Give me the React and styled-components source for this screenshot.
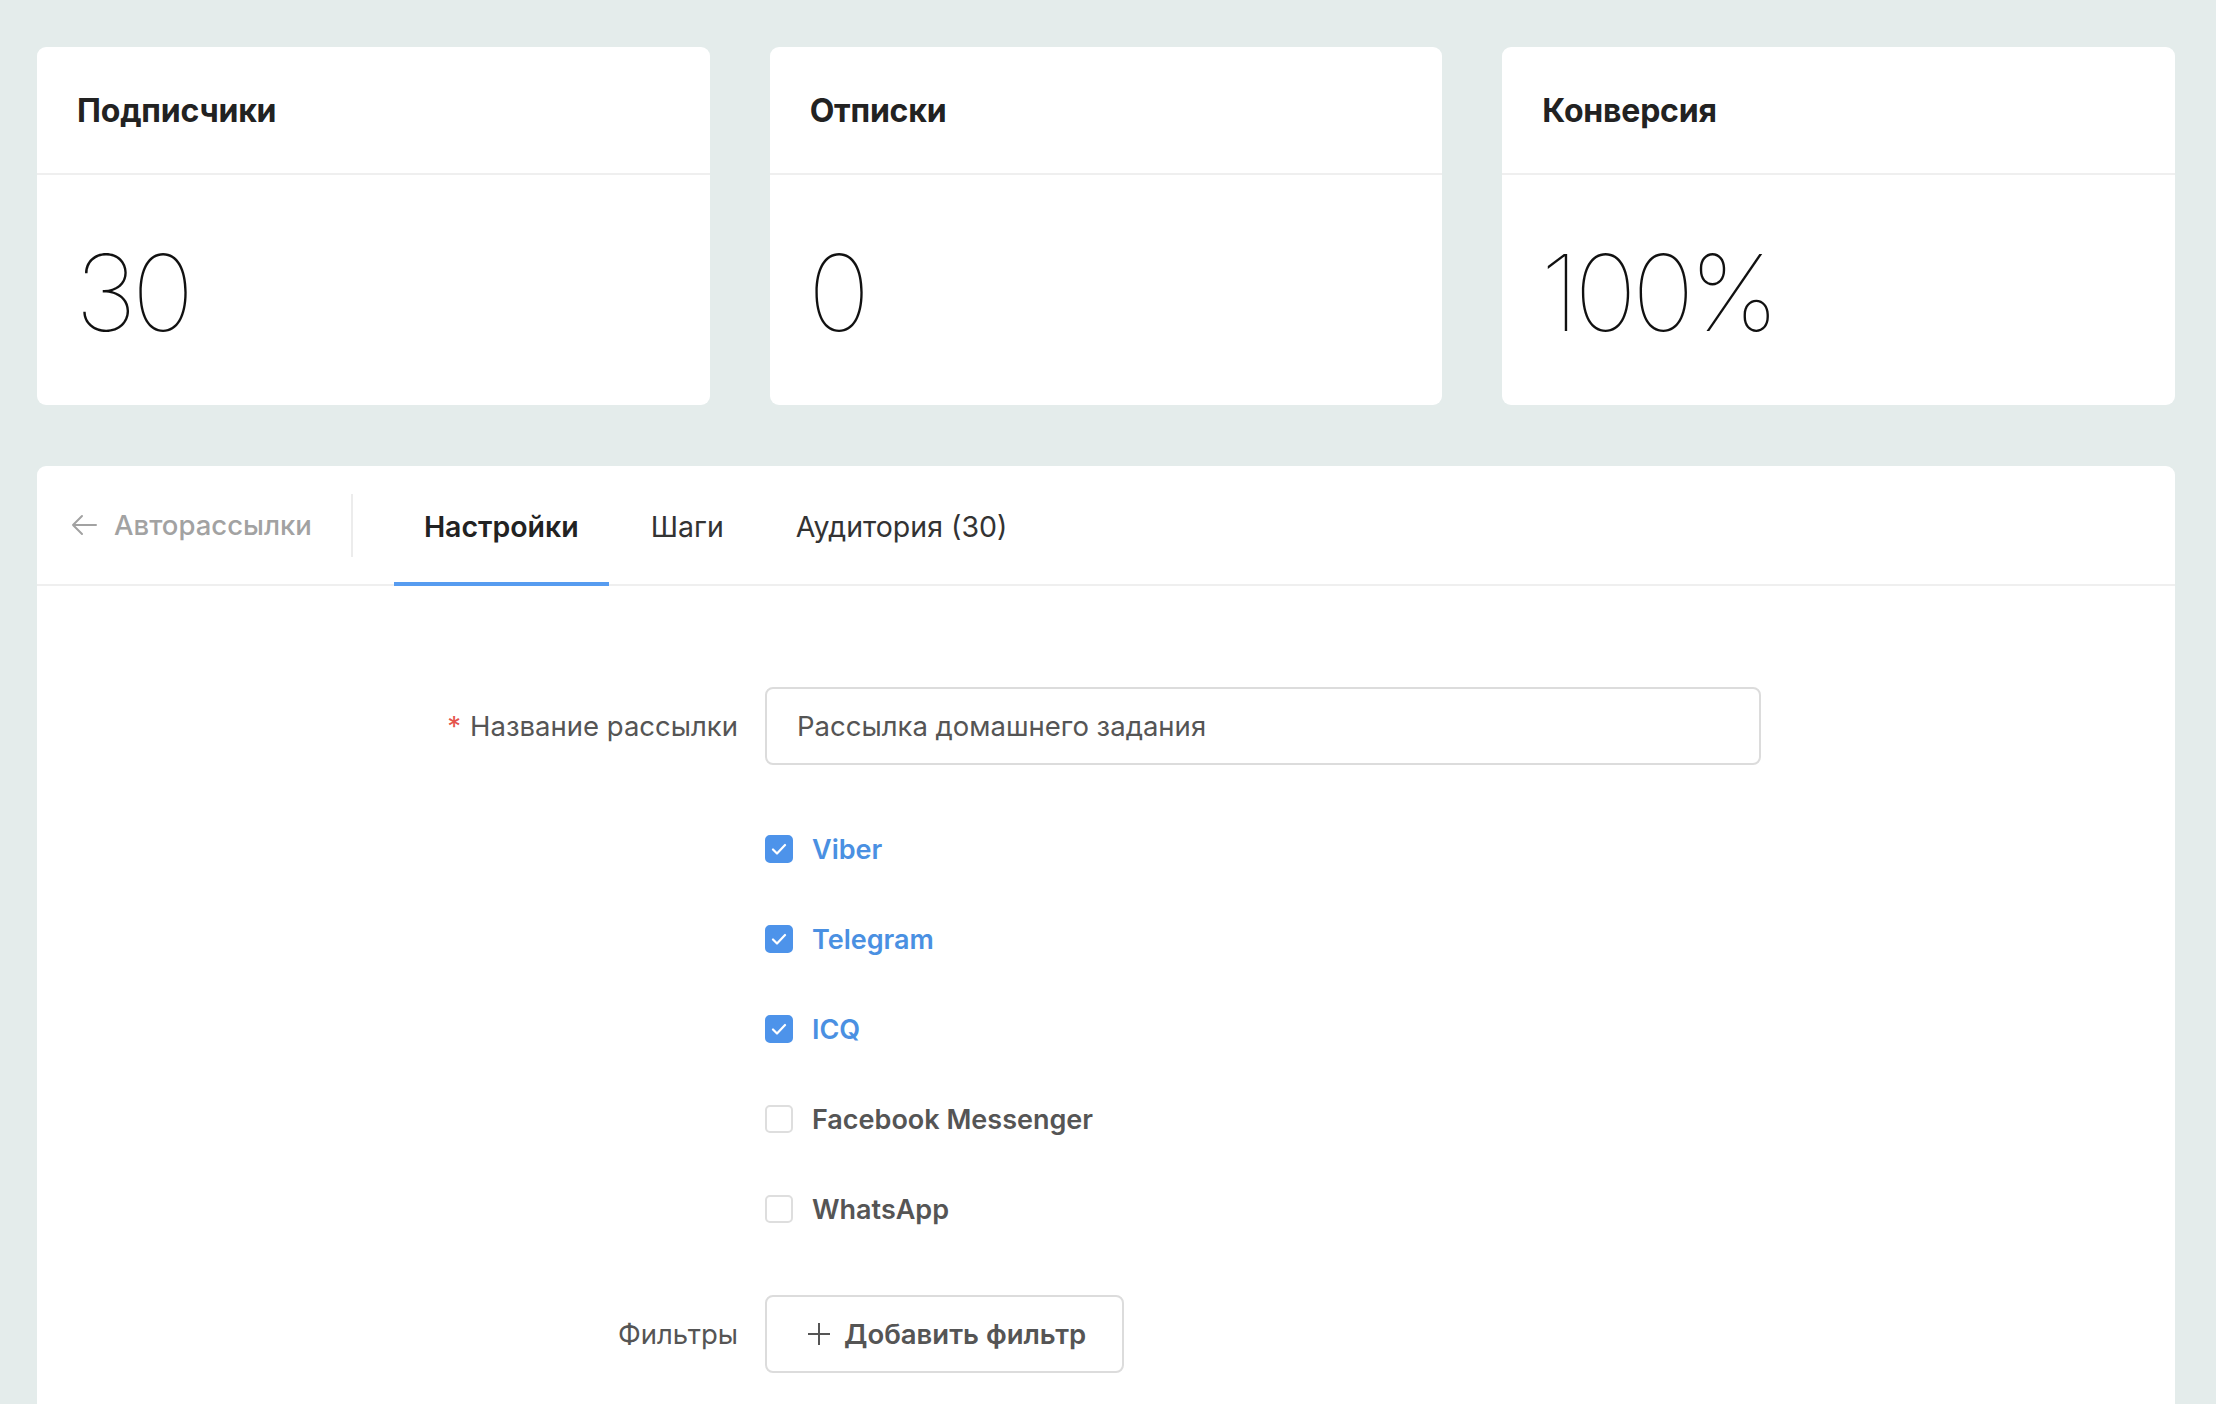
import React from "react";
import styled, { createGlobalStyle } from "styled-components";

const GlobalStyle = createGlobalStyle`
	html, body {
		margin: 0;
		padding: 0;
		background: #e4eceb;
		font-family: Inter, "Liberation Sans", Arial, sans-serif;
		overflow: hidden;
	}
	* {
		box-sizing: border-box;
	}
`;

const Page = styled.div`
	padding: 47px 41px 0 37px;
	display: flex;
	flex-direction: column;
	gap: 61px;
`;

const StatsRow = styled.div`
	display: grid;
	grid-template-columns: repeat(3, 1fr);
	gap: 60px;
`;

const StatCard = styled.div`
	background: #fff;
	border-radius: 9px;
	height: 358px;
	display: flex;
	flex-direction: column;
`;

const StatHeader = styled.div`
	height: 128px;
	padding: 1px 40px 0;
	display: flex;
	align-items: center;
	border-bottom: 2px solid #efefef;
	font-size: 32px;
	font-weight: 700;
	color: #222;
	letter-spacing: -0.2px;
`;

const StatValue = styled.div`
	flex: 1;
	padding: 4px 40px 0 38px;
	display: flex;
	align-items: center;
	font-size: 106px;
	font-weight: 100;
	color: #111;
	letter-spacing: -5px;
`;

const Panel = styled.div`
	background: #fff;
	border-radius: 9px 9px 0 0;
	min-height: 1000px;
`;

const TabBar = styled.div`
	height: 120px;
	display: flex;
	align-items: stretch;
	padding-left: 34px;
	border-bottom: 2px solid #efefef;
`;

const BackLink = styled.a`
	display: flex;
	align-items: center;
	gap: 17px;
	padding-right: 39px;
	color: #a2a2a2;
	font-size: 27.5px;
	font-weight: 500;
	text-decoration: none;
`;

const Divider = styled.div`
	width: 2px;
	height: 63px;
	align-self: center;
	background: #ececec;
`;

const Tabs = styled.div`
	display: flex;
	gap: 12px;
	margin-left: 41px;
`;

const Tab = styled.div`
	display: flex;
	align-items: center;
	padding: 4px 30px 0;
	margin-bottom: -2px;
	border-bottom: 4px solid ${(p) => (p.$active ? "#579cf0" : "transparent")};
	font-size: 28.5px;
	font-weight: ${(p) => (p.$active ? 600 : 400)};
	color: ${(p) => (p.$active ? "#222" : "#333")};
`;

const Form = styled.div`
	display: grid;
	grid-template-columns: 701px 996px;
	column-gap: 27px;
	padding-top: 101px;
	align-items: center;
`;

const Label = styled.div`
	text-align: right;
	font-size: 27.5px;
	color: #555;
`;

const Required = styled.span`
	color: #e5534b;
	margin-right: 9px;
`;

const TextInput = styled.input`
	height: 78px;
	width: 100%;
	border: 2px solid #dcdcdc;
	border-radius: 8px;
	padding: 0 30px;
	font-family: inherit;
	font-size: 27.5px;
	color: #555;
	outline: none;
`;

const ChannelList = styled.div`
	grid-column: 2;
	display: flex;
	flex-direction: column;
	padding: 39px 0 41px;
`;

const Channel = styled.label`
	height: 90px;
	display: flex;
	align-items: center;
	gap: 19px;
	font-size: 27px;
	font-weight: 560;
	color: ${(p) => (p.$checked ? "#4a90e2" : "#555")};
`;

const Box = styled.span`
	width: 28px;
	height: 28px;
	border-radius: 5px;
	display: flex;
	align-items: center;
	justify-content: center;
	background: ${(p) => (p.$checked ? "#4d93ea" : "#fff")};
	border: 2px solid ${(p) => (p.$checked ? "#4d93ea" : "#dedede")};
`;

const AddButton = styled.button`
	justify-self: start;
	height: 78px;
	width: 359px;
	display: flex;
	align-items: center;
	gap: 13px;
	padding: 0 0 0 40px;
	background: #fff;
	border: 2px solid #dcdcdc;
	border-radius: 8px;
	font-family: inherit;
	font-size: 27.5px;
	font-weight: 560;
	color: #555;
`;

const ArrowLeft = () => (
	<svg width="26" height="22" viewBox="0 0 26 22" fill="none">
		<path d="M25 11H2M11 2L2 11l9 9" stroke="#a2a2a2" strokeWidth="2" strokeLinecap="round" strokeLinejoin="round" />
	</svg>
);

const Check = () => (
	<svg width="16" height="12" viewBox="0 0 16 12" fill="none">
		<path d="M2 6.5l4 4L14 2" stroke="#fff" strokeWidth="2.2" strokeLinecap="round" strokeLinejoin="round" />
	</svg>
);

const Plus = () => (
	<svg width="24" height="24" viewBox="0 0 24 24" fill="none">
		<path d="M12 1v22M1 12h22" stroke="#555" strokeWidth="2" />
	</svg>
);

const stats = [
	{ title: "Подписчики", value: "30" },
	{ title: "Отписки", value: "0" },
	{ title: "Конверсия", value: "100%" },
];

const channels = [
	{ name: "Viber", checked: true },
	{ name: "Telegram", checked: true },
	{ name: "ICQ", checked: true },
	{ name: "Facebook Messenger", checked: false },
	{ name: "WhatsApp", checked: false },
];

export default function App() {
	return (
		<>
			<GlobalStyle />
			<Page>
				<StatsRow>
					{stats.map((s) => (
						<StatCard key={s.title}>
							<StatHeader>{s.title}</StatHeader>
							<StatValue>{s.value}</StatValue>
						</StatCard>
					))}
				</StatsRow>

				<Panel>
					<TabBar>
						<BackLink>
							<ArrowLeft />
							Авторассылки
						</BackLink>
						<Divider />
						<Tabs>
							<Tab $active>Настройки</Tab>
							<Tab>Шаги</Tab>
							<Tab>Аудитория (30)</Tab>
						</Tabs>
					</TabBar>

					<Form>
						<Label>
							<Required>*</Required>Название рассылки
						</Label>
						<TextInput defaultValue="Рассылка домашнего задания" />

						<ChannelList>
							{channels.map((c) => (
								<Channel key={c.name} $checked={c.checked}>
									<Box $checked={c.checked}>{c.checked && <Check />}</Box>
									{c.name}
								</Channel>
							))}
						</ChannelList>

						<Label>Фильтры</Label>
						<AddButton>
							<Plus />
							Добавить фильтр
						</AddButton>
					</Form>
				</Panel>
			</Page>
		</>
	);
}
